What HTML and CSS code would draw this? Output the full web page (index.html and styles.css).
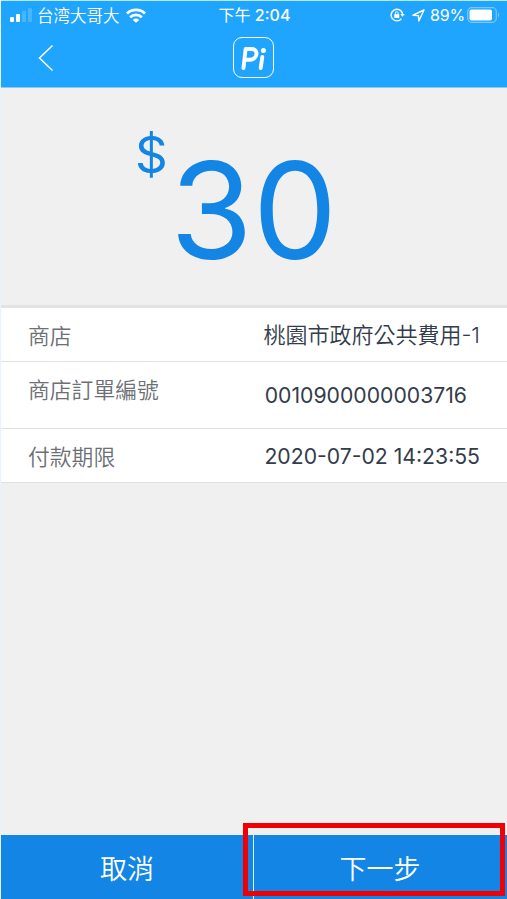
FILE: index.html
```html
<!DOCTYPE html>
<html lang="zh-Hant">
<head>
<meta charset="utf-8">
<title>Pi</title>
<link rel="stylesheet" href="styles.css">
</head>
<body>
<div class="app">
  <header class="header">
    <div class="status">
      <div class="status-left">
        <svg class="signal" width="23" height="14" viewBox="0 0 23 14" fill="#fff">
          <rect x="0" y="9" width="4" height="5" rx="1"/><rect x="6" y="6" width="4" height="8" rx="1"/>
          <g opacity=".18"><rect x="12" y="3" width="4" height="11" rx="1"/><rect x="18" y="0" width="4" height="14" rx="1"/></g>
        </svg>
        <span class="carrier">台湾大哥大</span>
        <svg class="wifi" width="20" height="15" viewBox="0 0 20 15" fill="none" stroke="#fff" stroke-width="2.8">
          <path d="M1 5.6a12.8 12.8 0 0 1 18 0"/><path d="M4.2 9.3a8.2 8.2 0 0 1 11.6 0"/><path d="M10 14.8 6.8 11.9a4.6 4.6 0 0 1 6.4 0z" fill="#fff" stroke="none"/>
        </svg>
      </div>
      <div class="clock"><span class="period">下午</span> 2:04</div>
      <div class="status-right">
        <svg class="lock" width="15" height="14" viewBox="0 0 15 14" fill="none" stroke="#fff" stroke-width="1.4">
          <path d="M11.5 10.6A5.8 5.8 0 1 1 12.6 6"/><path d="M10.3 6h4.5l-2.2 2.8z" fill="#fff" stroke="none"/>
          <rect x="4.3" y="6.2" width="5" height="3.8" fill="#fff" stroke="none"/><path d="M5.4 6.5V5.2a1.4 1.4 0 0 1 2.8 0v1.3" stroke-width="1"/>
        </svg>
        <svg class="arrow" width="13" height="13" viewBox="0 0 13 13" fill="none" stroke="#fff" stroke-width="1.4" stroke-linejoin="round"><path d="M12 1 1 6.2l5.4.4.4 5.4z"/></svg>
        <span class="percent">89%</span>
        <svg class="battery" width="33" height="16" viewBox="0 0 33 16">
          <rect x=".7" y=".7" width="28.6" height="14.6" rx="4" fill="none" stroke="#fff" stroke-opacity=".4" stroke-width="1.2"/>
          <rect x="2.5" y="2.5" width="22.5" height="11" rx="2" fill="#fff"/><path d="M31 5.5q2 2.5 0 5z" fill="#fff" opacity=".45"/>
        </svg>
      </div>
    </div>
    <div class="nav">
      <svg class="back" width="16" height="28" viewBox="0 0 16 28" fill="none" stroke="#fff" stroke-width="1.5"><path d="M14.5 1.5 1.5 14l13 12.5"/></svg>
      <div class="logo"><svg width="30" height="30" viewBox="0 0 30 30" fill="none" stroke="#fff" stroke-linecap="round" stroke-linejoin="round">
        <path d="M4.5 25 6.6 6h5.9c7.8 0 6 10.8-1.6 10.8H6.5" stroke-width="3.9"/><path d="m23.3 14-1.6 11" stroke-width="3.9"/><circle cx="24.4" cy="7.4" r="2.5" fill="#fff" stroke="none"/>
      </svg></div>
    </div>
  </header>
  <section class="amount"><span class="currency">$</span><span class="number">30</span></section>
  <section class="details">
    <div class="row"><span class="label">商店</span><span class="value shop">桃園市政府公共費用-1</span></div>
    <div class="row tall"><span class="label">商店訂單編號</span><span class="value order">0010900000003716</span></div>
    <div class="row"><span class="label">付款期限</span><span class="value date">2020-07-02 14:23:55</span></div>
  </section>
  <footer class="actions"><div class="button cancel">取消</div><div class="button next">下一步</div><div class="highlight"></div></footer>
</div>
</body>
</html>
```
FILE: styles.css
```css
* { box-sizing: border-box; }
body { margin: 0; background: #f0f0f0; font-family: Inter, "Noto Sans CJK TC", sans-serif; }
svg { display: block; flex: none; }
.app { width: 507px; height: 899px; display: flex; flex-direction: column; border-left: 1px solid #e8f3fb; overflow: hidden; white-space: nowrap; }
.header { height: 88px; flex: none; background: #20a5ff; border-top: 1px solid #b5ecf8; border-bottom: 1px solid #8fc8ee; color: #fff; }
.status { height: 28px; display: grid; grid-template-columns: 1fr auto 1fr; align-items: center; font-size: 16px; padding: 0 7px 0 9px; }
.status-left, .status-right { display: flex; align-items: center; }
.status-right { justify-content: flex-end; }
.carrier { margin: 0 6px 0 4px; font-size: 16.5px; font-weight: 350; font-family: "Noto Sans CJK SC", sans-serif; }
.clock { font-weight: 500; line-height: 20px; margin: 0 1px 0 0; }
.period { font-weight: 400; }
.lock { margin-right: 7px; }
.arrow { margin-right: 5px; }
.percent { margin-right: 2px; letter-spacing: -.2px; }
.nav { height: 58px; display: grid; grid-template-columns: 232px 41px 1fr; align-items: center; }
.back { margin-left: 37px; }
.logo { width: 41px; height: 41px; margin-top: -1px; border: 1.5px solid #fff; border-radius: 9px; display: grid; place-items: center; }
.amount { height: 217px; flex: none; display: flex; align-items: flex-start; padding: 41px 0 0 134px; color: #1285e5; line-height: 1; }
.currency { font-size: 51px; width: 35px; }
.number { font-size: 134px; margin-top: 14px; }
.details { background: #fff; border-top: 3px solid #e3e3e3; color: #333c4a; font-size: 21.2px; }
.row { height: 54px; display: flex; justify-content: space-between; align-items: center; padding: 0 27px 0 27px; border-bottom: 1px solid #e0e1e2; }
.tall { height: 67px; }
.label { color: #6c7075; font-size: 21.8px; font-weight: 350; margin-bottom: 1px; }
.tall .label { margin-bottom: 14px; }
.shop { font-size: 22px; font-weight: 350; margin-bottom: 3px; }
.order { margin-right: 13px; }
.actions { position: relative; height: 64px; margin-top: auto; display: grid; grid-template-columns: 252px 1fr; color: #fff; font-size: 27px; font-weight: 350; }
.button { background: #1285e5; display: grid; place-items: center; }
.next { border-left: 1px solid #e8ffff; padding-right: 1px; }
.highlight { position: absolute; left: 242px; top: -12px; width: 262px; height: 73px; border: 5px solid #f00005; }
```
